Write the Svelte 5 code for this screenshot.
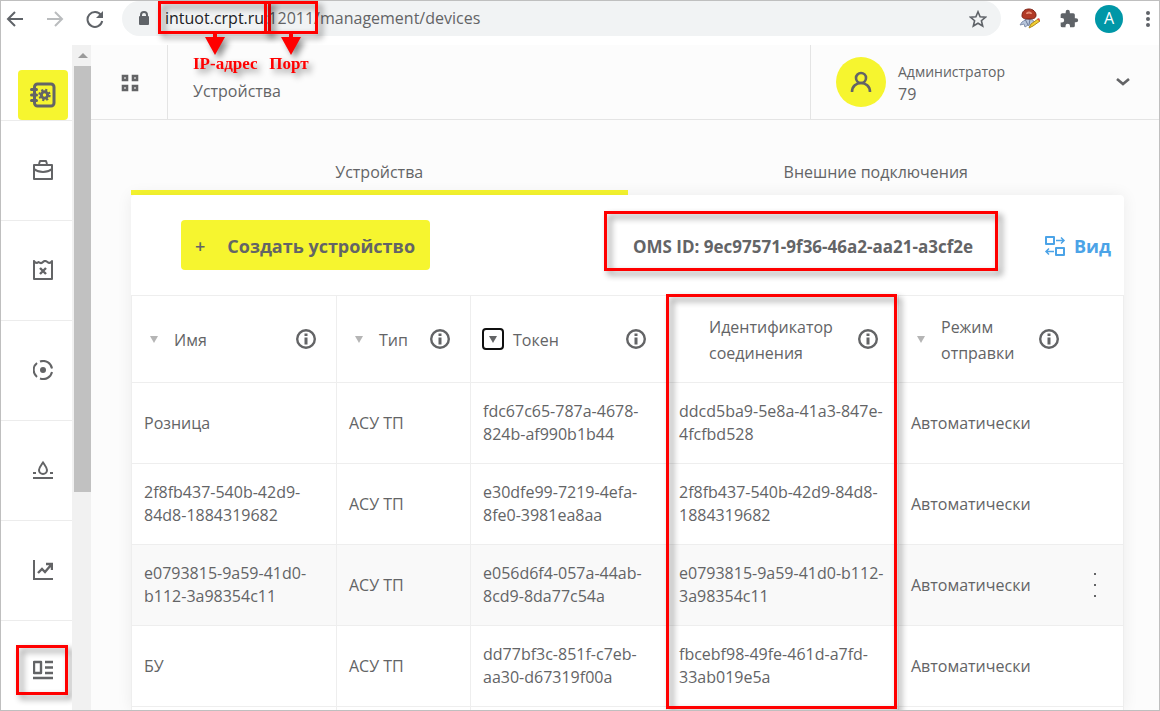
<script lang="ts">
  type Column = {
    title: string;
    width: number;
    sort: 'on' | 'off' | 'none';
  };

  const columns: Column[] = [
    { title: 'Имя', width: 206, sort: 'off' },
    { title: 'Тип', width: 134, sort: 'off' },
    { title: 'Токен', width: 196, sort: 'on' },
    { title: 'Идентификатор соединения', width: 232, sort: 'none' },
    { title: 'Режим отправки', width: 180, sort: 'off' },
  ];

  const devices = [
    {
      name: 'Розница',
      token: 'fdc67c65-787a-4678-824b-af990b1b44',
      connection: 'ddcd5ba9-5e8a-41a3-847e-4fcfbd528',
    },
    {
      name: '2f8fb437-540b-42d9-84d8-1884319682',
      token: 'e30dfe99-7219-4efa-8fe0-3981ea8aa',
      connection: '2f8fb437-540b-42d9-84d8-1884319682',
    },
    {
      name: 'e0793815-9a59-41d0-b112-3a98354c11',
      token: 'e056d6f4-057a-44ab-8cd9-8da77c54a',
      connection: 'e0793815-9a59-41d0-b112-3a98354c11',
    },
    {
      name: 'БУ',
      token: 'dd77bf3c-851f-c7eb-aa30-d67319f00a',
      connection: 'fbcebf98-49fe-461d-a7fd-33ab019e5a',
    },
  ];

  const menu = ['catalog', 'orders', 'receipts', 'cycle', 'utilisation', 'reports', 'management'];

  let selected = $state(2);
  let tab = $state(0);
</script>

{#snippet arrow()}
  <svg class="arrow" width="22" height="24" viewBox="0 0 22 24">
    <path d="M9 0h4v6h8L11 24 1 6h8z" fill="#f00" />
  </svg>
{/snippet}

<div class="window">
  <div class="browser">
    <button class="nav-button" aria-label="Back">
      <svg width="18" height="18" viewBox="0 0 18 18" fill="none" stroke="#5f6368" stroke-width="2">
        <path d="M17 9H2M9 2L2 9l7 7" />
      </svg>
    </button>
    <button class="nav-button" aria-label="Forward">
      <svg width="18" height="18" viewBox="0 0 18 18" fill="none" stroke="#babcbe" stroke-width="2">
        <path d="M1 9h15M9 2l7 7-7 7" />
      </svg>
    </button>
    <button class="nav-button" aria-label="Reload">
      <svg width="18" height="18" viewBox="0 0 18 18">
        <path d="M15 5.2A7.4 7.4 0 1 0 16.2 11" fill="none" stroke="#5f6368" stroke-width="2" />
        <path d="M17 1v7h-7z" fill="#5f6368" />
      </svg>
    </button>
    <div class="address">
      <svg width="12" height="15" viewBox="0 0 12 15">
        <rect x="1" y="5" width="10" height="9" rx="1" fill="#5f6368" />
        <path d="M3 6V4a3 3 0 0 1 6 0v2" fill="none" stroke="#5f6368" stroke-width="2" />
      </svg>
      <div class="url">
        <span class="marked host">intuot.crpt.ru<span class="frame">{@render arrow()}<b>IP-адрес</b></span></span>:<span
          class="marked port">12011<span class="frame">{@render arrow()}<b>Порт</b></span></span>/management/devices
      </div>
      <button class="icon-button" aria-label="Bookmark">
        <svg width="18" height="18" viewBox="0 0 18 18" fill="none" stroke="#5f6368" stroke-width="1.600">
          <path d="M9 1.800l2.100 5 5.400.4-4.100 3.500 1.300 5.300L9 13.200 4.300 16l1.300-5.300L1.500 7.200l5.400-.4z" />
        </svg>
      </button>
    </div>
    <button class="icon-button" aria-label="Extension">
      <svg width="22" height="22" viewBox="0 0 22 22">
        <path d="M3 14l5-3 6 1 1 4-4 3-2-2-3 2-1-3-4 1z" fill="#b8c6dc" stroke="#8492ad" />
        <path d="M6 11l3 6M11 11l-1 6" stroke="#6d7b99" />
        <path d="M3 8c0-5 3-7 7-7s7 3 7 6-2 4-7 4-7-1-7-3z" fill="#b23a26" stroke="#7c2114" />
        <path d="M8 6c0-2 4-2 4 0" fill="none" stroke="#e48c74" stroke-width="2" />
        <path d="M10 20l2-4 7-5 2 2-7 5z" fill="#f2cf32" stroke="#b08a1c" />
        <path d="M18 11l2-1 1 2-1 1z" fill="#d44" />
      </svg>
    </button>
    <button class="icon-button" aria-label="Extensions">
      <svg width="20" height="20" viewBox="0 0 24 24">
        <path
          fill="#5f6368"
          d="M20.500 11H19V7a2 2 0 0 0-2-2h-4V3.500a2.500 2.500 0 0 0-5 0V5H4a2 2 0 0 0-2 2v3.800h1.500a2.700 2.700 0 0 1 0 5.400H2V20a2 2 0 0 0 2 2h3.800v-1.500a2.700 2.700 0 0 1 5.400 0V22H17a2 2 0 0 0 2-2v-4h1.500a2.500 2.500 0 0 0 0-5z"
        />
      </svg>
    </button>
    <button class="profile" aria-label="Profile">A</button>
    <button class="icon-button" aria-label="Browser menu">
      <svg width="6" height="18" viewBox="0 0 6 18" fill="#5f6368">
        <circle cx="3" cy="3" r="2" />
        <circle cx="3" cy="9" r="2" />
        <circle cx="3" cy="15" r="2" />
      </svg>
    </button>
  </div>

  <div class="page">
    <nav class="sidebar">
      {#each menu as item}
        <a href="#{item}" class="menu-item {item}" aria-label={item}>
          <span class="menu-icon">
            {#if item === 'catalog'}
              <svg width="26" height="26" viewBox="0 0 26 26" fill="none" stroke="#636466" stroke-width="3">
                <rect x="4.500" y="2" width="19.500" height="22" rx="3" />
                <path d="M1.500 7.500h5M1.500 13h5M1.500 18.500h5" stroke-linecap="round" />
                <circle cx="14.500" cy="13" r="3.200" stroke-width="3" />
                <circle cx="14.500" cy="13" r="5.200" stroke-width="2" stroke-dasharray="2.100 2" />
              </svg>
            {:else if item === 'orders'}
              <svg width="20" height="20" viewBox="0 0 20 20" fill="none" stroke="#636466" stroke-width="2">
                <path d="M1 5h18v14H1zM6 4l1-3h6l1 3M1 9c5 4 13 4 18 0" stroke-linejoin="round" />
              </svg>
            {:else if item === 'receipts'}
              <svg width="20" height="20" viewBox="0 0 20 20" fill="none" stroke="#636466" stroke-width="2">
                <path d="M1 1v18h18V1c-1 2-3 2.500-4.500 1C13 .8 11 .8 10 2 9 3.200 7 3.200 5.500 2 4 3.500 2 3 1 1z" stroke-linejoin="round" />
                <path d="M7 8l6 6M13 8l-6 6" stroke-width="2.400" />
              </svg>
            {:else if item === 'cycle'}
              <svg width="20" height="20" viewBox="0 0 20 20" fill="none" stroke="#636466" stroke-width="2">
                <path d="M7 1.500A9 9 0 0 1 19 8.500M19 12A9 9 0 0 1 7 18.500M4 17A9 9 0 0 1 4 3" />
                <circle cx="10" cy="10" r="3" fill="#636466" stroke="none" />
              </svg>
            {:else if item === 'utilisation'}
              <svg width="20" height="20" viewBox="0 0 20 20" fill="none" stroke="#636466" stroke-width="2">
                <path d="M10 2.500c-2 3-4 5-4 7.500a4 4 0 0 0 8 0c0-2.500-2-4.500-4-7.500zM0 18h20" />
                <path d="M0 13h3M17 13h3" />
              </svg>
            {:else if item === 'reports'}
              <svg width="20" height="20" viewBox="0 0 20 20" fill="none" stroke="#636466" stroke-width="2">
                <path d="M1 0v19h19" />
                <path d="M5 13l4-4 3 3 6-7M13 4h6v6" stroke-width="2.400" />
              </svg>
            {:else}
              <svg width="20" height="20" viewBox="0 0 20 20" fill="none" stroke="#636466" stroke-width="2">
                <path d="M1 2h7v11H1zM12 2h8M12 7.500h8M12 13h8M0 18h20" stroke-width="2.400" stroke-linejoin="round" />
              </svg>
              <span class="frame"></span>
            {/if}
          </span>
        </a>
      {/each}
    </nav>
    <div class="scrollbar">
      <span class="scroll-up"></span>
      <span class="thumb"></span>
    </div>

    <main>
      <header>
        <button class="apps" aria-label="Приложения">
          <svg width="18" height="18" viewBox="0 0 18 18" fill="none" stroke="#636466">
            <path d="M2 2h4v4H2zM12 2h4v4h-4zM2 12h4v4H2zM12 12h4v4h-4z" stroke-width="2.600" />
          </svg>
        </button>
        <h1>Устройства</h1>
        <button class="user">
          <span class="avatar">
            <svg width="22" height="22" viewBox="0 0 22 22" fill="none" stroke="#636466" stroke-width="2.600">
              <circle cx="11" cy="7" r="5" />
              <path d="M2 21c0-12 18-12 18 0" />
            </svg>
          </span>
          <span class="user-name">Администратор<br /><span class="user-id">79</span></span>
          <svg width="14" height="9" viewBox="0 0 14 9" fill="none" stroke="#636466" stroke-width="2.600">
            <path d="M1 1l6 5 6-5" />
          </svg>
        </button>
      </header>

      <div class="content">
        <div class="tabs" role="tablist">
          <button role="tab" aria-selected={tab === 0} class:active={tab === 0} onclick={() => (tab = 0)}>
            Устройства
          </button>
          <button role="tab" aria-selected={tab === 1} class:active={tab === 1} onclick={() => (tab = 1)}>
            Внешние подключения
          </button>
        </div>

        <section class="card">
          <div class="toolbar">
            <button class="create"><span class="plus">+</span>Создать устройство</button>
            <div class="marked oms">OMS ID: 9ec97571-9f36-46a2-aa21-a3cf2e<span class="frame"></span></div>
            <button class="view">
              <svg width="22" height="22" viewBox="0 0 22 22" fill="none" stroke="#4ba3e7" stroke-width="2">
                <path d="M2 2h8v7H2zM12 13h8v7h-8z" stroke-linejoin="round" />
                <path d="M12 5.500h8M17 2.500l3 3-3 3M10 16.500H2M5 13.500l-3 3 3 3" stroke-width="1.500" />
              </svg>
              Вид
            </button>
          </div>

          <div class="table-wrap">
            <table>
              <colgroup>
                {#each columns as column}
                  <col style="width: {column.width}px" />
                {/each}
                <col class="actions-col" />
              </colgroup>
              <thead>
                <tr>
                  {#each columns as column}
                    <th>
                      <div class="head">
                        <button class="sort {column.sort}" aria-label="Сортировать">
                          <svg width="8" height="7" viewBox="0 0 8 7"><path d="M0 0h8L4 7z" fill="currentColor" /></svg>
                        </button>
                        <span class="head-title">{column.title}</span>
                        <svg class="info" width="20" height="20" viewBox="0 0 20 20">
                          <circle cx="10" cy="10" r="8.800" fill="none" stroke="#636466" stroke-width="2.400" />
                          <path d="M8.500 4.500h3v2.500h-3zM8.500 8.500h3v7h-3z" fill="#636466" />
                        </svg>
                      </div>
                    </th>
                  {/each}
                  <th></th>
                </tr>
              </thead>
              <tbody>
                {#each devices as device, i}
                  <tr class:selected={selected === i} onmouseenter={() => (selected = i)}>
                    <td>{device.name}</td>
                    <td>АСУ ТП</td>
                    <td>{device.token}</td>
                    <td>{device.connection}</td>
                    <td>Автоматически</td>
                    <td>
                      {#if selected === i}
                        <button class="more" aria-label="Действия">
                          <svg width="4" height="26" viewBox="0 0 4 26" fill="#636466">
                            <path d="M1 1h2v2H1zM1 12h2v2H1zM1 23h2v2H1z" />
                          </svg>
                        </button>
                      {/if}
                    </td>
                  </tr>
                {/each}
                <tr><td></td><td></td><td></td><td></td><td></td><td></td></tr>
              </tbody>
            </table>
            <span class="frame column-frame"></span>
          </div>
        </section>
      </div>
    </main>
  </div>
</div>

<style>
  :global(body) {
    margin: 0;
  }

  .window {
    display: flex;
    flex-direction: column;
    box-sizing: border-box;
    height: 100vh;
    border: 1px solid #bfbfbf;
    background: #fff;
    color: #636466;
    font: 16px/23px 'Open Sans', 'Noto Sans', sans-serif;
    overflow: hidden;
  }

  button {
    padding: 0;
    border: none;
    background: none;
    color: inherit;
    font: inherit;
    cursor: pointer;
  }

  svg {
    display: block;
    flex: none;
  }

  /* red callouts */
  .marked {
    position: relative;
  }

  .frame {
    position: absolute;
    inset: 0;
    z-index: 2;
    border: 3px solid #f00;
    filter: drop-shadow(4px 4px 3px rgba(0, 0, 0, 0.45));
    pointer-events: none;
  }

  .host .frame {
    inset: -6px -7px -5px -7px;
  }

  .port .frame {
    inset: -6px -4px -5px -4px;
  }

  .arrow {
    position: absolute;
    top: 100%;
    left: 50%;
    margin-left: -11px;
  }

  .frame b {
    position: absolute;
    top: 50px;
    left: 2px;
    color: #f00;
    font: bold 17px/20px 'Liberation Serif', serif;
    white-space: nowrap;
  }

  .host b {
    left: 32px;
  }

  /* browser bar */
  .browser {
    display: flex;
    flex: none;
    align-items: center;
    gap: 18px;
    height: 35px;
    padding: 0 8px 9px 5px;
  }

  .nav-button {
    margin-right: 4px;
  }

  .address {
    display: flex;
    flex: 1;
    align-items: center;
    gap: 15px;
    height: 35px;
    margin-left: -4px;
    padding: 0 14px 0 16px;
    border-radius: 18px;
    background: #f1f3f4;
  }

  .url {
    flex: 1;
    white-space: nowrap;
  }

  .host {
    color: #202124;
  }

  .profile {
    width: 28px;
    height: 28px;
    margin: 0 4px 0 -2px;
    border-radius: 50%;
    background: #0097a7;
    color: #fff;
  }

  .page {
    display: flex;
    flex: 1;
    min-height: 0;
  }

  /* sidebar */
  .sidebar {
    flex: none;
    width: 71px;
    overflow: hidden;
  }

  .menu-item {
    display: flex;
    align-items: center;
    box-sizing: border-box;
    height: 100px;
    padding: 0 0 1px 17px;
    border-bottom: 1px solid #ececec;
  }

  .menu-item.catalog {
    align-items: flex-end;
    height: 76px;
    padding-bottom: 0;
  }

  .menu-icon {
    position: relative;
    display: flex;
    align-items: center;
    justify-content: center;
    width: 50px;
    height: 50px;
  }

  .catalog .menu-icon {
    border-radius: 4px;
    background: #f6f52f;
  }

  .menu-item .frame {
    inset: 0 0 0 -2px;
  }

  .scrollbar {
    display: flex;
    flex: none;
    flex-direction: column;
    align-items: center;
    width: 17px;
    padding-left: 2px;
    background: #f1f1f1;
  }

  .scroll-up {
    margin: 8px 0;
    border: 5px solid transparent;
    border-top: none;
    border-bottom-color: #9a9a9a;
  }

  .thumb {
    width: 17px;
    height: 64%;
    background: #c1c1c1;
  }

  main {
    display: flex;
    flex: 1;
    flex-direction: column;
    min-width: 0;
    background: #fcfcfc;
  }

  header {
    display: flex;
    flex: none;
    height: 74px;
    border-bottom: 1px solid #e4e4e4;
  }

  .apps {
    display: flex;
    align-items: center;
    justify-content: center;
    width: 77px;
    padding: 2px 0 0 2px;
    border-right: 1px solid #e4e4e4;
    box-sizing: border-box;
  }

  h1 {
    flex: 1;
    margin: 0;
    padding: 34px 25px 0;
    font-size: 16px;
    font-weight: 500;
    line-height: 24px;
  }

  .user {
    display: flex;
    align-items: center;
    width: 349px;
    padding: 0 29px 0 25px;
    border-left: 1px solid #e4e4e4;
    box-sizing: border-box;
    text-align: left;
  }

  .avatar {
    display: flex;
    align-items: center;
    justify-content: center;
    width: 50px;
    height: 50px;
    border-radius: 50%;
    background: #f6f52f;
  }

  .user-name {
    flex: 1;
    padding: 3px 0 0 12px;
    font-size: 14px;
    line-height: 22px;
  }

  .user-id {
    font-size: 16px;
  }

  .content {
    display: flex;
    flex: 1;
    flex-direction: column;
    min-height: 0;
    padding: 30px 35px 0 40px;
  }

  .tabs {
    display: flex;
    flex: none;
  }

  .tabs button {
    flex: 1;
    height: 45px;
    padding-top: 4px;
    border-bottom: 5px solid transparent;
  }

  .tabs .active {
    border-bottom-color: #f6f52f;
  }

  .card {
    display: flex;
    flex: 1;
    flex-direction: column;
    min-height: 0;
    border-radius: 4px 4px 0 0;
    background: #fff;
    box-shadow: 0 0 16px rgba(0, 0, 0, 0.07);
  }

  .toolbar {
    display: flex;
    flex: none;
    align-items: center;
    height: 100px;
    padding: 0 13px 0 50px;
    font-weight: bold;
  }

  .create {
    display: flex;
    align-items: center;
    gap: 22px;
    height: 50px;
    padding: 2px 15px 0 14px;
    border-radius: 4px;
    background: #f6f52f;
    font-size: 18px;
    font-weight: bold;
  }

  .plus {
    font-weight: 600;
  }

  .oms {
    margin: 3px 71px 0 auto;
    font-size: 17px;
  }

  .oms .frame {
    inset: -24px -25px -13px -29px;
  }

  .view {
    display: flex;
    align-items: center;
    gap: 8px;
    padding-top: 2px;
    color: #4ba3e7;
    font-size: 18px;
    font-weight: bold;
  }

  /* device table */
  .table-wrap {
    position: relative;
    flex: 1;
    min-height: 0;
  }

  table {
    width: 100%;
    border-spacing: 0;
    table-layout: fixed;
  }

  .actions-col {
    width: 45px;
  }

  th,
  td {
    box-sizing: border-box;
    border: 0 solid #eee;
    text-align: left;
  }

  th {
    height: 88px;
    padding: 0 20px 0 11px;
    border-top-width: 1px;
    border-bottom-width: 1px;
    font-weight: 500;
    line-height: 26px;
  }

  td {
    height: 81px;
    padding: 0 8px 0 12px;
    border-bottom-width: 1px;
  }

  th:not(:nth-child(n + 5)),
  td:not(:nth-child(n + 5)) {
    border-right-width: 1px;
  }

  th:first-child,
  td:first-child {
    border-left-width: 1px;
  }

  th:last-child,
  td:last-child {
    padding: 0 0 0 14px;
    border-right-width: 1px;
  }

  .selected td {
    background: #f9f9f9;
  }

  .head {
    display: flex;
    align-items: center;
    gap: 9px;
  }

  .head-title {
    flex: 1;
    min-width: 0;
    padding-top: 2px;
  }

  .info {
    margin-left: -9px;
  }

  .sort {
    display: flex;
    flex: none;
    align-items: center;
    justify-content: center;
    width: 22px;
    height: 22px;
    color: #b5b5b5;
  }

  .sort.on {
    border: 2px solid #101010;
    border-radius: 4px;
    color: #636466;
  }

  .sort.none {
    visibility: hidden;
  }

  .more {
    display: block;
  }

  /* spans the fourth column whatever the table's width */
  .column-frame {
    inset: -1px calc(23% - 1px) 1px calc(54% - 1px);
  }
</style>
